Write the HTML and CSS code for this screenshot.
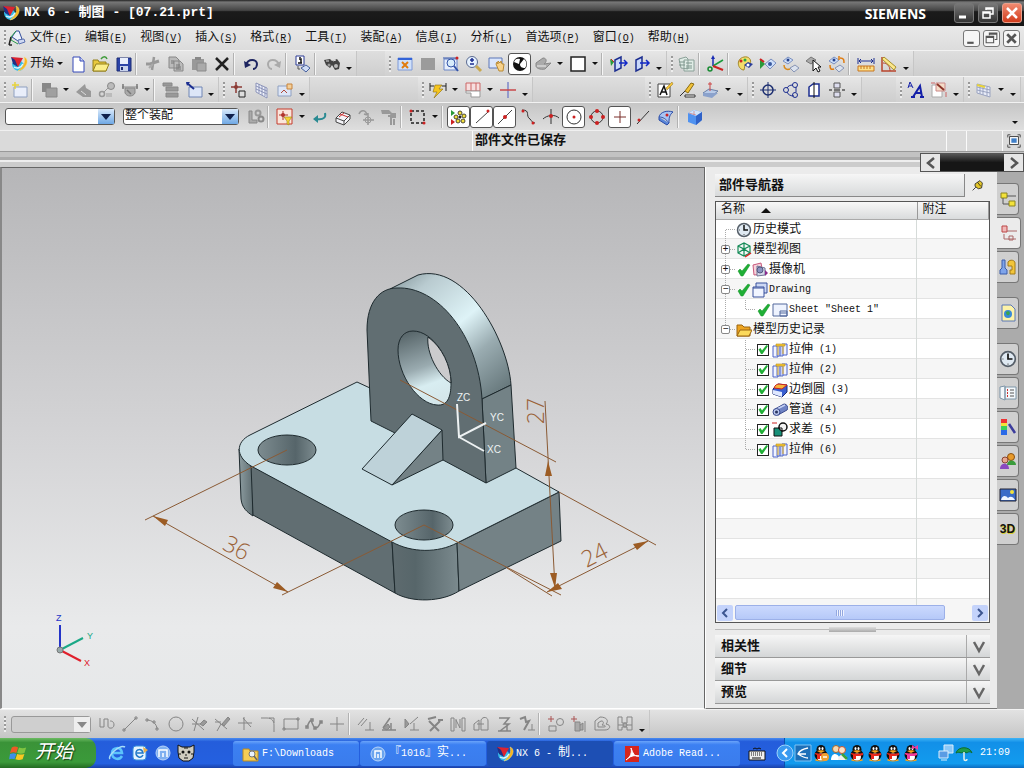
FILE: index.html
```html
<!DOCTYPE html>
<html lang="zh-CN">
<head>
  <meta charset="UTF-8"/>
  <meta name="viewport" content="width=device-width, initial-scale=1.0"/>
  <title>NX 6 - 制图 - [07.21.prt]</title>
  <link rel="stylesheet" href="styles.css">
</head>
<body>

  <!-- Shared icons -->
  <svg class="defs" aria-hidden="true">
    <symbol id="nx" viewBox="0 0 18 18"><path d="M2 8c0 10 12 10 13 2l-5-5z" fill="#35bdea"/><path d="M4 12c3 2 7 1 9-3" stroke="#e4f8ff" stroke-width="1.500"/><path d="M1 2l12 1-5 9z" fill="#dc2430"/><path d="M1 2l4 3 3 7-5-3z" fill="#1f2f86"/><path d="M14 2c6 2 3 12-6 14 5-4 8-9 6-14z" fill="#f8b41c" stroke="#fbe07a" stroke-width=".5"/></symbol>
    <symbol id="tick" viewBox="0 0 16 16"><path d="M2 9l2-2 2 2 6-7 2 1-7 11h-2z" fill="#1fae35" stroke="#16902a" stroke-width=".5"/></symbol>
    <symbol id="extrude" viewBox="0 0 16 16"><path d="M1 4h5v11H1zM10 2h5v11h-5z" fill="#f0f3ff" stroke="#4d63c8"/><path d="M5 4h6v10H5z" fill="#c5d0f6" stroke="#5b6fc4"/><path d="M8 5v9" stroke="#4d63c8"/><path d="M4 2h9v2H4z" fill="#f4c63a" stroke="#b98d16" stroke-width=".6"/><path d="M6 4v9M11 4v8" stroke="#e8b52c"/></symbol>
    <symbol id="qq" viewBox="0 0 18 18"><ellipse cx="9" cy="16" rx="6" ry="1.5" fill="#f7a51d"/><ellipse cx="9" cy="11" rx="6.500" ry="5.500" fill="#111"/><circle cx="9" cy="5.500" r="4.500" fill="#111"/><ellipse cx="9" cy="13" rx="4" ry="3.500" fill="#fff"/><ellipse cx="7.500" cy="4.500" rx="1" ry="1.500" fill="#fff"/><ellipse cx="10.500" cy="4.500" rx="1" ry="1.500" fill="#fff"/><path d="M5 7c2-1 6-1 8 0l-4 2z" fill="#f7a51d"/><path d="M3 9c4 1 8 1 12 0v2c-2 1-5 1-7 1v3H5v-4l-2-1z" fill="#e8281c"/></symbol>
    <symbol id="clock" viewBox="0 0 16 16"><circle cx="8" cy="8" r="6.500" fill="#dfe9f2" stroke="#555e68" stroke-width="1.500"/><path d="M8 3v5h4" stroke="#111" stroke-width="1.500"/><path d="M3 8h1M8 12v1" stroke="#555"/></symbol>
  </svg>

  <!-- Title bar -->
  <header class="titlebar">
    <svg class="icon"><use href="#nx"/></svg>
    <h1>NX 6 - 制图 - [07.21.prt]</h1>
    <span class="brand">SIEMENS</span>
    <div class="win-buttons">
      <button aria-label="最小化"><svg viewBox="0 0 18 18"><path d="M4 13h7" stroke="#fff" stroke-width="3"/></svg></button>
      <button aria-label="还原"><svg viewBox="0 0 18 18"><path d="M7 6V4h7v6h-3M4 8h7v6H4zM4 9h7M7 5h7" stroke="#fff" stroke-width="1.500"/></svg></button>
      <button class="close" aria-label="关闭"><svg viewBox="0 0 18 18"><path d="M4 4l10 10M14 4L4 14" stroke="#fff" stroke-width="2.500"/></svg></button>
    </div>
  </header>

  <!-- Menu -->
  <nav class="menubar">
    <i class="grip"></i>
    <svg class="icon" viewBox="0 0 18 18"><path d="M4 8l4-6h3l3 8-4 2z" fill="#eef2fc" stroke="#334e9c"/><path d="M10 11l6-1 1 3-6 2z" fill="#cfd9f2" stroke="#5a70b0"/><path d="M8 2L3 8v3l7 4" stroke="#2a9a4a"/><path d="M3 8l-2 8M1 16h3" stroke="#222" stroke-width="1.500"/></svg>
    <ul>
      <li><a href="#">文件<span class="en">(<u>F</u>)</span></a></li>
      <li><a href="#">编辑<span class="en">(<u>E</u>)</span></a></li>
      <li><a href="#">视图<span class="en">(<u>V</u>)</span></a></li>
      <li><a href="#">插入<span class="en">(<u>S</u>)</span></a></li>
      <li><a href="#">格式<span class="en">(<u>R</u>)</span></a></li>
      <li><a href="#">工具<span class="en">(<u>T</u>)</span></a></li>
      <li><a href="#">装配<span class="en">(<u>A</u>)</span></a></li>
      <li><a href="#">信息<span class="en">(<u>I</u>)</span></a></li>
      <li><a href="#">分析<span class="en">(<u>L</u>)</span></a></li>
      <li><a href="#">首选项<span class="en">(<u>P</u>)</span></a></li>
      <li><a href="#">窗口<span class="en">(<u>O</u>)</span></a></li>
      <li><a href="#">帮助<span class="en">(<u>H</u>)</span></a></li>
    </ul>
    <div class="doc-buttons">
      <button aria-label="最小化文档"><svg viewBox="0 0 14 14"><path d="M3 11h6" stroke="#555" stroke-width="2"/></svg></button>
      <button aria-label="还原文档"><svg viewBox="0 0 14 14"><path d="M5 4V2h7v6h-2M2 5h7v6H2zM2 6h7M5 3h7" stroke="#555"/></svg></button>
      <button aria-label="关闭文档"><svg viewBox="0 0 14 14"><path d="M3 3l8 8M11 3l-8 8" stroke="#555" stroke-width="2.500"/></svg></button>
    </div>
  </nav>

  <!-- Standard / view / utility toolbars -->
  <div class="toolbar">
    <div class="group">
      <i class="grip"></i>
      <button class="start-app"><svg class="icon"><use href="#nx"/></svg>开始<i class="caret"></i></button>
      <button class="tool" aria-label="新建"><svg viewBox="0 0 18 18"><path d="M4 2h7l4 4v11H4z" fill="#fff" stroke="#3548b8"/><path d="M11 2v4h4" fill="#cdd6f6" stroke="#3548b8"/></svg></button>
      <button class="tool" aria-label="打开"><svg viewBox="0 0 18 18"><path d="M1 5h5l1 2h7v9H1z" fill="#e9c93e" stroke="#94801c"/><path d="M4 9h13l-3 7H1z" fill="#fbee8a" stroke="#94801c"/><path d="M9 4c2-3 5-3 6 0" stroke="#3f9b3a" stroke-width="1.500"/></svg></button>
      <button class="tool" aria-label="保存"><svg viewBox="0 0 18 18"><path d="M2 3h14v13H2z" fill="#2c44a8" stroke="#1c2c74"/><path d="M5 3h8v6H5z" fill="#e8eefc"/><path d="M5 11h8v5H5z" fill="#c8d2ec"/><path d="M6 12h2v3H6z" fill="#1c2c74"/></svg></button>
      <i class="sep"></i>
      <button class="tool" aria-label="剪切"><svg viewBox="0 0 18 18"><path d="M10 2L8 15" stroke="#999" stroke-width="2.500"/><path d="M2 9h4l9-3" stroke="#999" stroke-width="3"/><path d="M5 13l4-4" stroke="#aaa" stroke-width="2"/></svg></button>
      <button class="tool" aria-label="复制"><svg viewBox="0 0 18 18"><path d="M2 2h7l3 3v8H2zM7 6h6l3 3v7H7z" fill="#bbb" stroke="#888"/><path d="M9 10h4M9 12h5M9 14h5M4 6h3M4 8h3" stroke="#777"/></svg></button>
      <button class="tool" aria-label="粘贴"><svg viewBox="0 0 18 18"><path d="M2 4h12v11H2z" fill="#999"/><path d="M5 2h6v3H5z" fill="#888"/><path d="M7 8h9v8H7z" fill="#aaa" stroke="#8a8a8a"/></svg></button>
      <button class="tool" aria-label="删除"><svg viewBox="0 0 18 18"><path d="M3 3l12 12M15 3L3 15" stroke="#222" stroke-width="2.500"/></svg></button>
      <i class="sep"></i>
      <button class="tool" aria-label="撤消"><svg viewBox="0 0 18 18"><path d="M4 10c2-7 11-6 11-1 0 3-2 5-4 5" stroke="#1d2560" stroke-width="2"/><path d="M2 6l1 7 6-3z" fill="#1d2560"/></svg></button>
      <button class="tool" aria-label="重做"><svg viewBox="0 0 18 18"><path d="M14 10c-2-7-11-6-11-1 0 3 2 5 4 5" stroke="#aaa" stroke-width="2"/><path d="M16 6l-1 7-6-3z" fill="#aaa"/></svg></button>
      <i class="sep"></i>
      <button class="tool" aria-label="信息"><svg viewBox="0 0 18 18"><path d="M2 1h8v9H2z" fill="#fff" stroke="#2a3b95"/><path d="M5 4h2v4M4 8h4M6 2v1" stroke="#111" stroke-width="1.500"/><path d="M7 13l5-3 4 3-4 4z" fill="#cfdcf5" stroke="#46609e"/><path d="M4 11v3h2" stroke="#555"/></svg></button>
      <i class="sep"></i>
      <button class="tool" aria-label="查找"><svg viewBox="0 0 18 18"><path d="M1 5l6-1 2 2 5-2 3 4-1 6-4 1-3-5-2 3-4-3z" fill="#444"/><circle cx="13" cy="11" r="2" fill="#bbb"/><circle cx="6" cy="10" r="1.500" fill="#999"/><path d="M3 6h3M10 6l3-1" stroke="#ddd"/></svg></button>
      <i class="caret low"></i>
    </div>
    <div class="group gap-wide">
      <i class="grip"></i>
      <button class="tool" aria-label="适合窗口"><svg viewBox="0 0 18 18"><path d="M2 3h14v12H2z" fill="#cfe0fa" stroke="#7f9ad8"/><path d="M2 4h14" stroke="#3464d8" stroke-width="2"/><path d="M6 7l6 6M12 7l-6 6" stroke="#e07c10" stroke-width="2"/></svg></button>
      <button class="tool" aria-label="按选择缩放"><svg viewBox="0 0 18 18"><path d="M2 3h14v12H2z" fill="#9b9b9b"/></svg></button>
      <button class="tool" aria-label="缩放窗口"><svg viewBox="0 0 18 18"><path d="M2 4h13v11H2z" fill="#e6eefb" stroke="#6a86c8"/><path d="M1 3h15" stroke="#3454a8"/><circle cx="9" cy="8" r="4" fill="#d8ecfb" stroke="#3454a8"/><path d="M12 11l4 5" stroke="#3454a8" stroke-width="2"/><circle cx="15" cy="3" r="1.500" fill="#c22"/></svg></button>
      <button class="tool" aria-label="放大缩小"><svg viewBox="0 0 18 18"><circle cx="7" cy="7" r="5.500" fill="#e6f2ff" stroke="#5a6a90"/><path d="M7 3v4M5 5h4M5 9h4" stroke="#1c2e90" stroke-width="1.500"/><path d="M11 11l5 5" stroke="#c8a850" stroke-width="3"/></svg></button>
      <button class="tool" aria-label="平移"><svg viewBox="0 0 18 18"><path d="M1 3h13v10H1z" fill="#dbe6fb" stroke="#5c76b8"/><path d="M8 9l1-2 1 2V6l2 2 1-2 1 3 2 0-1 7h-4z" fill="#f8d28a" stroke="#b98a34"/></svg></button>
      <button class="tool on" aria-label="着色"><svg viewBox="0 0 18 18"><circle cx="9" cy="9" r="7" fill="#111"/><path d="M9 9l4-5c3 2 3 7 1 9-3 0-5-1-5-4zM8 9L3 7c1-3 3-4 6-3z" fill="#fff"/></svg></button>
      <button class="tool" aria-label="渲染样式"><svg viewBox="0 0 18 18"><path d="M2 8l7-5c4 0 4 4 1 6l7-1-6 6c-5 1-9-1-9-3z" fill="#aaa" stroke="#888"/><path d="M3 11l9 0" stroke="#eee"/></svg></button>
      <i class="caret"></i>
      <button class="tool" aria-label="背景"><svg viewBox="0 0 18 18"><path d="M2 2h14v14H2z" fill="#fff" stroke="#222" stroke-width="1.500"/></svg></button>
      <i class="caret"></i>
      <i class="sep"></i>
      <button class="tool" aria-label="导入"><svg viewBox="0 0 18 18"><path d="M5 5l6-3v11l-6 3z" fill="#c9d8fa" stroke="#1c2e90" stroke-width="1.500"/><path d="M9 8h7M14 5l3 3-3 3" stroke="#1228c8" stroke-width="1.500"/><path d="M0 4l4 3-3 4z" fill="#2a9a3a"/><path d="M1 4l3 3" stroke="#c22"/></svg></button>
      <button class="tool" aria-label="导出"><svg viewBox="0 0 18 18"><path d="M3 5l6-3v11l-6 3z" fill="#c9d8fa" stroke="#1c2e90" stroke-width="1.500"/><path d="M7 8h8M13 5l3 3-3 3" stroke="#1228c8" stroke-width="1.500"/></svg></button>
      <i class="caret low"></i>
    </div>
    <div class="group">
      <i class="grip"></i>
      <button class="tool" aria-label="图层"><svg viewBox="0 0 18 18"><path d="M1 4l7-2 2 2v10l-7-1zM6 5h10v11H6z" fill="#e0ece6" stroke="#8aa098"/><path d="M1 7h6M1 10h6M8 8h6M8 11h6M8 13h6" stroke="#7d958c"/></svg></button>
      <i class="sep"></i>
      <button class="tool" aria-label="坐标系"><svg viewBox="0 0 18 18"><path d="M6 2v9" stroke="#1a2cb4" stroke-width="1.500"/><path d="M6 11l10-6" stroke="#1a9a3a" stroke-width="1.500"/><path d="M6 11l10 4" stroke="#c22" stroke-width="2"/><circle cx="3" cy="14" r="2" stroke="#168a30" stroke-width="1.500"/><path d="M6 0l2 4H4z" fill="#1a2cb4"/></svg></button>
      <i class="sep"></i>
      <button class="tool" aria-label="对象显示"><svg viewBox="0 0 18 18"><path d="M8 2c5-1 8 3 6 7l-5 1-1 5c-6 0-9-11 0-13z" fill="#f3dd6c" stroke="#a4882a"/><circle cx="5" cy="6" r="1.500" fill="#c22"/><circle cx="9" cy="5" r="1.500" fill="#2a4"/><path d="M8 10l4-3 5 2-4 4z" fill="#2a3f9a"/><circle cx="12" cy="10" r="1.500" fill="#fff"/></svg></button>
      <button class="tool" aria-label="显示和隐藏"><svg viewBox="0 0 18 18"><path d="M1 4l5 5-5 5z" fill="#2a9a3a"/><path d="M1 4l4 3" stroke="#c22" stroke-width="2"/><path d="M6 9l6-5 5 4-6 6z" fill="#cfe0fa" stroke="#7a8fc0"/><circle cx="11" cy="9" r="2" fill="#3a5aa0"/></svg></button>
      <button class="tool" aria-label="隐藏"><svg viewBox="0 0 18 18"><path d="M1 6l5-4 5 3-5 4z" fill="#cfe0fa" stroke="#7a8fc0"/><circle cx="6" cy="5" r="1.500" fill="#24408a"/><path d="M8 13l5-3 4 3-5 4z" fill="#dbe2ee" stroke="#8794b4"/><path d="M2 10c0 4 3 5 6 4" stroke="#d98a1c" stroke-width="1.500"/></svg></button>
      <button class="tool" aria-label="选择"><svg viewBox="0 0 18 18"><path d="M1 6l5-4 5 3-5 4z" fill="#aaa" stroke="#777"/><path d="M8 5v11l3-3 2 4 2-1-2-4h3z" fill="#fff" stroke="#111"/></svg></button>
      <button class="tool" aria-label="颠倒显示"><svg viewBox="0 0 18 18"><path d="M1 6l5-4 5 3-5 4z" fill="#cfe0fa" stroke="#7a8fc0"/><path d="M7 13l5-3 4 3-5 4z" fill="#dbe2ee" stroke="#8794b4"/><circle cx="6" cy="5" r="1.500" fill="#24408a"/><path d="M2 10c0 4 1 5 4 4M12 3c4 0 4 2 4 5M11 1v4" stroke="#e07c10" stroke-width="1.500"/></svg></button>
      <i class="sep"></i>
      <button class="tool" aria-label="测量距离"><svg viewBox="0 0 18 18"><path d="M1 3v6M17 3v6M2 6h14M4 4L2 6l2 2M14 4l2 2-2 2" stroke="#1c2e90"/><path d="M1 11h16v5H1z" fill="#fbe08a" stroke="#c8741c"/><path d="M4 11v3M7 11v3M10 11v3M13 11v3" stroke="#c8741c"/></svg></button>
      <button class="tool" aria-label="测量角度"><svg viewBox="0 0 18 18"><path d="M2 2v14h14" stroke="#b8442c" stroke-width="1.500"/><path d="M3 8c4 0 7 3 7 8" stroke="#b8442c"/><path d="M4 2l12 10-2 3L2 4z" fill="#fbe78a" stroke="#a8902a"/></svg></button>
      <i class="caret low"></i>
    </div>
  </div>

  <!-- Drawing / dimension / annotation toolbars -->
  <div class="toolbar">
    <div class="group">
      <i class="grip"></i>
      <button class="tool" aria-label="新建图纸页"><svg viewBox="0 0 18 18"><path d="M3 6h13v10H3z" fill="#e9eefa" stroke="#8fa0c0"/><path d="M4 1v7M1 4h7" stroke="#e8d33a" stroke-width="1.500"/></svg></button>
      <i class="sep"></i>
      <button class="tool" aria-label="基本视图"><svg viewBox="0 0 18 18"><path d="M2 2h9v9H2z" fill="#888"/><path d="M6 7h11v9H6z" fill="#a0a0a0" stroke="#888"/></svg></button>
      <i class="caret"></i>
      <button class="tool" aria-label="投影视图"><svg viewBox="0 0 18 18"><path d="M1 11l9-8 1 4 5 3v6H8z" fill="#999"/><path d="M6 10l5 4" stroke="#ddd"/></svg></button>
      <button class="tool" aria-label="局部放大图"><svg viewBox="0 0 18 18"><circle cx="13" cy="5" r="3.500" fill="#bbb" stroke="#888"/><circle cx="4" cy="13" r="2.500" stroke="#999" stroke-width="1.500"/><path d="M6 11l4-4" stroke="#999"/><path d="M8 12h6v4H8z" fill="#bbb"/></svg></button>
      <button class="tool" aria-label="剖视图"><svg viewBox="0 0 18 18"><path d="M1 6h16M4 7h10v5c-2 4-8 4-10 0z" fill="#aaa" stroke="#888"/><path d="M2 3v5M16 3v5M6 9l4 4" stroke="#777" stroke-width="1.500"/></svg></button>
      <i class="caret"></i>
      <i class="sep"></i>
      <button class="tool" aria-label="断开视图"><svg viewBox="0 0 18 18"><path d="M1 2h9v3H1zM4 6h12v4H4zM4 12h12v4H4z" fill="#999" stroke="#888"/></svg></button>
      <button class="tool" aria-label="更新视图"><svg viewBox="0 0 18 18"><path d="M4 6h13v10H4z" fill="#dde6f7" stroke="#7186b4"/><path d="M2 2l7 6" stroke="#1c2e90" stroke-width="2"/><path d="M1 1h4L2 5z" fill="#1c2e90"/></svg></button>
      <i class="caret low"></i>
    </div>
    <div class="group">
      <i class="grip"></i>
      <button class="tool" aria-label="原点"><svg viewBox="0 0 18 18"><path d="M6 1v11M1 6h11" stroke="#8c3a34" stroke-width="1.500"/><circle cx="6" cy="6" r="2" fill="#8c3a34"/><path d="M9 10h6v6H9z" fill="#ddd" stroke="#222"/></svg></button>
      <button class="tool" aria-label="表格"><svg viewBox="0 0 18 18"><path d="M3 2l11 5v10L3 11z" fill="#eef1fb" stroke="#8b93b8"/><path d="M6 3v9M9 5v9M12 6v9M3 5l11 5M3 8l11 5" stroke="#8b93b8"/></svg></button>
      <button class="tool" aria-label="对齐视图"><svg viewBox="0 0 18 18"><path d="M2 5h13v10H2z" fill="#dde6f7" stroke="#8fa0c0"/><path d="M11 3h5v5h-5z" fill="#f3cf9a" stroke="#c8843c"/><path d="M5 12l3-3 3 3" stroke="#b04a3a"/></svg></button>
      <i class="caret low"></i>
    </div>
    <div class="group gap-dim">
      <i class="grip"></i>
      <button class="tool" aria-label="自动判断尺寸"><svg viewBox="0 0 18 18"><path d="M1 2v8M17 2v8M1 5h4M13 5h4" stroke="#222"/><path d="M6 4h7l-3 4h4l-9 9 3-6H4z" fill="#f5c51e" stroke="#8a6c10" stroke-width=".6"/></svg></button>
      <i class="caret"></i>
      <button class="tool" aria-label="符号标注"><svg viewBox="0 0 18 18"><path d="M2 2h14v8H2z" fill="#f6dede" stroke="#c66"/><path d="M7 2v8M12 2v8" stroke="#c66"/><path d="M2 10h14v6H7v-4H2z" fill="#fff" stroke="#999"/></svg></button>
      <i class="caret"></i>
      <button class="tool" aria-label="中心标记"><svg viewBox="0 0 18 18"><path d="M9 1v16" stroke="#7d86c8" stroke-width="1.500"/><path d="M1 9h16" stroke="#c8474a" stroke-width="1.500"/></svg></button>
      <i class="caret low"></i>
    </div>
    <div class="group gap-note">
      <i class="grip"></i>
      <button class="tool" aria-label="注释"><svg viewBox="0 0 18 18"><path d="M2 3h12v13H2z" fill="#fff" stroke="#444"/><path d="M4 14l4-9 3 9M5 11h5" stroke="#111" stroke-width="1.500"/><path d="M10 7l6-6 1 2-6 6z" fill="#f3c33a" stroke="#94741a" stroke-width=".5"/></svg></button>
      <button class="tool" aria-label="特征控制框"><svg viewBox="0 0 18 18"><path d="M6 10l6-8 3 1-6 9z" fill="#f3c33a" stroke="#8a6c10"/><path d="M1 15l5-5M6 14h10v2H6z" fill="#fff" stroke="#333"/></svg></button>
      <button class="tool" aria-label="基准"><svg viewBox="0 0 18 18"><path d="M1 12l6-4 9 2-6 5z" fill="#b9cbe8" stroke="#6c82a8"/><path d="M1 12v3l9 2 6-5" fill="#8ba2cc"/><path d="M8 1v9M6 3h4" stroke="#c44"/></svg></button>
      <i class="caret"></i>
      <i class="caret low"></i>
    </div>
    <div class="group">
      <i class="grip"></i>
      <button class="tool" aria-label="中心线"><svg viewBox="0 0 18 18"><circle cx="9" cy="9" r="5" stroke="#1c2e70" stroke-width="1.500"/><path d="M9 1v16M1 9h16" stroke="#1c2e70"/></svg></button>
      <button class="tool" aria-label="螺栓圆"><svg viewBox="0 0 18 18"><path d="M11 4C8 4 6 5 5 7M5 11c1 3 4 4 7 4M14 6v5" stroke="#1c2e90"/><circle cx="13" cy="4" r="2.500" stroke="#1c2e90"/><circle cx="4" cy="9" r="2.500" stroke="#1c2e90"/><circle cx="13" cy="14" r="2.500" stroke="#1c2e90"/></svg></button>
      <button class="tool" aria-label="对称中心线"><svg viewBox="0 0 18 18"><path d="M4 6l4-3h6v12H4z" fill="#fff" stroke="#1c2e90" stroke-width="1.500"/><path d="M9 1v16" stroke="#111"/></svg></button>
      <button class="tool" aria-label="圆柱中心线"><svg viewBox="0 0 18 18"><path d="M6 2h6v5H6zM6 11h6v5H6z" fill="#dde" stroke="#555"/><path d="M1 9h3M6 9h6M14 9h3" stroke="#111"/></svg></button>
      <i class="caret low"></i>
    </div>
    <div class="group gap-style">
      <i class="grip"></i>
      <button class="tool" aria-label="样式"><svg viewBox="0 0 18 18"><path d="M1 7l2-6 3 6M2 5h3" stroke="#1420a8"/><path d="M6 16l7-11 2 11M9 12h5M4 16h4M13 16h4" stroke="#1420a8" stroke-width="2"/></svg></button>
      <button class="tool" aria-label="编辑文本"><svg viewBox="0 0 18 18"><path d="M2 4h10v12H2z" fill="#fff" stroke="#aaa"/><path d="M6 2h9v8H6z" fill="#f4dcc8" stroke="#c88"/><path d="M7 3l7 6" stroke="#8a3428" stroke-width="2"/><path d="M1 2h4M16 11v5" stroke="#c66"/></svg></button>
      <i class="caret low"></i>
    </div>
    <div class="group">
      <i class="grip"></i>
      <button class="tool" aria-label="表格注释"><svg viewBox="0 0 18 18"><path d="M2 3l13 3v10L2 12z" fill="#e8ecf8" stroke="#9aa3c0"/><path d="M5 4v9M8 5v9M12 6v9M2 6l13 3M2 9l13 3" stroke="#9aa3c0"/><path d="M2 4l8 2" stroke="#e8d33a" stroke-width="2"/></svg></button>
      <i class="caret"></i>
      <i class="caret low"></i>
    </div>
  </div>

  <!-- Selection bar -->
  <div class="toolbar selection">
    <span class="combo type"><select aria-label="类型过滤器"><option></option></select></span>
    <span class="combo scope"><select aria-label="选择范围"><option>整个装配</option></select></span>
    <button class="tool" aria-label="链接"><svg viewBox="0 0 18 18"><path d="M2 3h3v9h5v3H2z" fill="#aaa" stroke="#888"/><circle cx="11" cy="5" r="2.500" stroke="#999" stroke-width="2"/><circle cx="14" cy="11" r="2.500" stroke="#8a8a8a" stroke-width="2"/></svg></button>
    <i class="sep"></i>
    <button class="tool" aria-label="常规选择过滤器"><svg viewBox="0 0 18 18"><path d="M1 1h15v15H1z" fill="#fae6dc" stroke="#c43a2c"/><path d="M7 3v9M3 7h9" stroke="#b0342a"/><circle cx="7" cy="7" r="2" fill="#b0342a"/><path d="M8 9h8l-3 4v4l-2-1v-3z" fill="#f5d534" stroke="#94801c" stroke-width=".6"/></svg></button>
    <i class="caret"></i>
    <button class="tool" aria-label="重置"><svg viewBox="0 0 18 18"><path d="M14 5c1 4-1 7-8 6" stroke="#2a8a92" stroke-width="2"/><path d="M2 11l5-4v8z" fill="#2a8a92"/></svg></button>
    <button class="tool" aria-label="体"><svg viewBox="0 0 18 18"><path d="M2 10l6-6 8 3v4l-6 6-8-3z" fill="#f4f4f8" stroke="#444"/><path d="M2 10l8 3 6-6M10 13v4" stroke="#444"/><path d="M6 6l8 3M5 9l5-4" stroke="#c33"/></svg></button>
    <button class="tool" aria-label="装配约束"><svg viewBox="0 0 18 18"><path d="M2 6c2-5 7-4 8 1M10 7l-3-1M11 5v12M6 12h11" stroke="#999" stroke-width="1.500"/><circle cx="11" cy="12" r="3" stroke="#999"/></svg></button>
    <button class="tool" aria-label="移动组件"><svg viewBox="0 0 18 18"><path d="M1 2h8l3 3h4v5h-4l-2-4H2z" fill="#999"/><path d="M8 8h3v9M14 11v6" stroke="#999" stroke-width="2"/></svg></button>
    <i class="sep"></i>
    <button class="tool" aria-label="矩形选择"><svg viewBox="0 0 18 18"><path d="M2 3h13v12H2z" stroke="#222" stroke-width="1.500" stroke-dasharray="3 2"/><circle cx="2" cy="3" r="1.500" fill="#c22"/><circle cx="15" cy="15" r="1.500" fill="#c22"/></svg></button>
    <i class="caret"></i>
    <i class="sep"></i>
    <button class="tool on" aria-label="启用捕捉点"><svg viewBox="0 0 18 18"><path d="M1 2l4 3-4 3z" fill="#2a9a3a"/><path d="M1 11l4 3-4 3z" fill="#c22"/><g fill="#f3df3a" stroke="#222" stroke-width=".8"><circle cx="10" cy="5" r="2"/><circle cx="6" cy="9" r="2"/><circle cx="14" cy="8" r="2"/><circle cx="8" cy="13" r="2"/><circle cx="13" cy="13" r="2"/></g><circle cx="10" cy="9" r="1.500" fill="#222"/></svg></button>
    <button class="tool on" aria-label="端点"><svg viewBox="0 0 18 18"><path d="M3 15L15 4" stroke="#444"/><circle cx="15" cy="3" r="1.500" fill="#c22"/></svg></button>
    <button class="tool on" aria-label="中点"><svg viewBox="0 0 18 18"><path d="M2 16L16 2" stroke="#444"/><circle cx="9" cy="9" r="2" fill="#c22"/></svg></button>
    <button class="tool" aria-label="控制点"><svg viewBox="0 0 18 18"><path d="M3 2c9 0 3 6 8 9 2 2 2 4 5 4" stroke="#333"/><circle cx="4" cy="3" r="1.500" fill="#c22"/><circle cx="14" cy="15" r="1.500" fill="#c22"/></svg></button>
    <button class="tool" aria-label="交点"><svg viewBox="0 0 18 18"><path d="M9 1v15M1 11c4-4 12-5 16-1" stroke="#333"/><circle cx="9" cy="8" r="2" fill="#c22"/></svg></button>
    <button class="tool on" aria-label="圆弧中心"><svg viewBox="0 0 18 18"><circle cx="9" cy="9" r="7" stroke="#333"/><circle cx="9" cy="9" r="1.500" fill="#c22"/></svg></button>
    <button class="tool" aria-label="象限点"><svg viewBox="0 0 18 18"><circle cx="9" cy="9" r="6" stroke="#333"/><g fill="#c22"><circle cx="9" cy="3" r="2"/><circle cx="3" cy="9" r="2"/><circle cx="15" cy="9" r="2"/><circle cx="9" cy="15" r="2"/></g></svg></button>
    <button class="tool on" aria-label="现有点"><svg viewBox="0 0 18 18"><path d="M9 3v12M3 9h12" stroke="#7a2e2a"/></svg></button>
    <button class="tool" aria-label="曲线上的点"><svg viewBox="0 0 18 18"><path d="M3 16L15 3" stroke="#333"/><circle cx="5" cy="12" r="1.500" fill="#c22"/></svg></button>
    <button class="tool" aria-label="曲面上的点"><svg viewBox="0 0 18 18"><path d="M2 9c1-5 8-7 14-5-4 3-4 7-4 11-3-4-6-6-10-6z" fill="#a9c4f2" stroke="#2a4ca8"/><path d="M2 9v3l8 5 2-2" fill="#5a86d8" stroke="#2a4ca8"/><circle cx="10" cy="7" r="1.500" fill="#c22"/></svg></button>
    <i class="sep"></i>
    <button class="tool" aria-label="着色体"><svg viewBox="0 0 18 18"><path d="M2 5l6-3 8 2v8l-6 5-8-3z" fill="#4f92f0"/><path d="M2 5l6-3 8 2-6 4z" fill="#cfe4fc"/><path d="M10 8l6-4v8l-6 5z" fill="#2f62c8"/><path d="M3 5l7 2M8 3v4" stroke="#c66" stroke-width=".6"/></svg></button>
    <i class="caret low last"></i>
  </div>

  <!-- Cue / status line -->
  <div class="status">
    <p class="cue"></p>
    <p class="message">部件文件已保存</p>
    <p class="cell"></p>
    <p class="cell wide"></p>
    <button aria-label="全屏"><svg viewBox="0 0 18 18"><path d="M2 5V2h3M13 2h3v3M16 13v3h-3M5 16H2v-3" stroke="#444"/><path d="M4 4h10v9H4z" fill="#fff" stroke="#333"/><path d="M6 6h6v5H6z" fill="#3f7fc8"/></svg></button>
  </div>
  <div class="divider">
    <div class="strip-nav">
      <button aria-label="向左"><svg viewBox="0 0 14 14"><path d="M10 2L4 7l6 5" stroke="#555" stroke-width="2.500"/></svg></button>
      <button aria-label="向右"><svg viewBox="0 0 14 14"><path d="M4 2l6 5-6 5" stroke="#555" stroke-width="2.500"/></svg></button>
    </div>
  </div>

  <main class="work">
    <!-- Graphics window -->
    <section class="viewport">
      <svg viewBox="2 168 702 540" preserveAspectRatio="xMinYMin meet" role="img" aria-label="零件模型">
        <defs>
          <linearGradient id="band" gradientUnits="userSpaceOnUse" x1="400" y1="275" x2="500" y2="395"><stop offset="0" stop-color="#8ea0a5"/><stop offset=".15" stop-color="#b9cbd0"/><stop offset=".48" stop-color="#def3f7"/><stop offset=".7" stop-color="#9aacb1"/><stop offset="1" stop-color="#66777b"/></linearGradient>
          <linearGradient id="bore" gradientUnits="userSpaceOnUse" x1="410" y1="332" x2="435" y2="402"><stop offset="0" stop-color="#59676b"/><stop offset=".5" stop-color="#9aabb0"/><stop offset=".75" stop-color="#d8edf1"/><stop offset="1" stop-color="#d4e6ea"/></linearGradient>
          <linearGradient id="hole"><stop offset="0" stop-color="#7d8c90"/><stop offset=".65" stop-color="#56656a"/><stop offset="1" stop-color="#7d8c90"/></linearGradient>
          <linearGradient id="corner"><stop offset="0" stop-color="#5e6b6f"/><stop offset=".35" stop-color="#57666a"/><stop offset="1" stop-color="#7b8a8e"/></linearGradient>
          <linearGradient id="end"><stop offset="0" stop-color="#8d9da1"/><stop offset="1" stop-color="#5f6d71"/></linearGradient>
        </defs>
        <!-- base plate -->
        <g stroke="#1e2a2e" stroke-width="1" stroke-linejoin="round">
          <path d="M239 449L241 499C242 508 247 512 253 516V467z" fill="url(#end)"/>
          <path d="M251 465L392 541L395 593L253 515z" fill="#616e72"/>
          <path d="M392 541L457 541L459 591C442 602 412 603 395 593z" fill="url(#corner)"/>
          <path d="M457 543L559 492L561 541L459 591z" fill="#748286"/>
          <path d="M357 382L250 435C236 442 235 456 251 466L392 542C412 553 438 553 457 543L559 492L516 468L370 388z" fill="#c7dde3"/>
          <ellipse cx="287" cy="450" rx="29" ry="15" fill="url(#hole)"/>
          <ellipse cx="424" cy="525" rx="29" ry="15" fill="url(#hole)"/>
          <!-- lug -->
          <path d="M390 289L418 275C465 262 508 340 511 385L482 399z" fill="url(#band)"/>
          <path d="M482 399L511 385L516 468L486 483z" fill="#738286"/>
          <path d="M371 421L367 330C367 302 380 288 397 288C437 286 478 334 482 399L486 483L443 460L393 432z" fill="#616e72"/>
          <path d="M398 350C398 338 404 331 413 331C433 331 451 360 451 383C451 398 447 406 437 405C418 404 398 375 398 350z" fill="url(#bore)"/>
          <path d="M428 337C426 352 438 376 451 383C451 366 442 347 428 337z" fill="#cbcbcd"/>
          <!-- rib -->
          <path d="M442 430L443 460L392 485z" fill="#748286"/>
          <path d="M412 414L442 430L392 485L362 469z" fill="#bed2d9"/>
        </g>
        <!-- dimensions -->
        <g stroke="#8a5a34" stroke-width="1">
          <path d="M145 520L287 450M153 516L288 592M282 595L424 525L561 595M507 568L552 596"/>
          <path d="M559 492L656 545M547 592L648 541M545 401L555 588M400 380L556 462"/>
        </g>
        <g fill="#9c5c24">
          <path d="M153 516L168 520L165 526zM288 592L277 582L273 588zM648 541L633 544L637 550zM547 592L558 583L562 589zM548 461L545 476H552zM555 588L550 573H557z"/>
        </g>
        <g class="dims">
          <text x="237" y="547" transform="rotate(28 237 547)">36</text>
          <text x="594" y="554" transform="rotate(-27 594 554)">24</text>
          <text x="535" y="411" transform="rotate(-90 535 411)">27</text>
        </g>
        <!-- work coordinate system -->
        <path d="M457 404L459 437L486 423M459 437L484 451" stroke="#eef2f3" stroke-width="2"/>
        <g class="wcs"><text x="457" y="401">ZC</text><text x="490" y="421">YC</text><text x="487" y="453">XC</text></g>
        <!-- view triad -->
        <g stroke-width="2">
          <path d="M60 650V625" stroke="#2434c8"/><path d="M60 650L83 638" stroke="#1aa886"/><path d="M60 650L81 661" stroke="#e0202c"/>
        </g>
        <circle cx="60" cy="650" r="3" fill="#9aa" stroke="#777"/>
        <g class="triad"><text x="56" y="621" fill="#2434c8">Z</text><text x="87" y="639" fill="#1aa886">Y</text><text x="84" y="666" fill="#e0202c">X</text></g>
      </svg>
    </section>

    <!-- Part navigator -->
    <aside class="navigator">
      <div class="nav-head">
        <h2>部件导航器</h2>
        <button aria-label="固定"><svg viewBox="0 0 16 16"><path d="M2 14l4-4" stroke="#222"/><path d="M5 6l6-4 3 3-1 6-4 1-4-3z" fill="#e3c62a" stroke="#222"/><path d="M8 4l4 5" stroke="#222"/></svg></button>
      </div>
      <div class="tree">
        <table>
          <thead><tr><th class="name">名称<i class="sort"></i></th><th>附注</th></tr></thead>
          <tbody>
            <tr><td><div class="node"><i class="guide first"></i><svg class="ico"><use href="#clock"/></svg>历史模式</div></td><td></td></tr>
            <tr><td><div class="node"><i class="guide mid"><b>+</b></i><svg class="ico" viewBox="0 0 16 16"><path d="M2 4l6-3 6 3v7l-6 3-6-3zM2 4l6 3 6-3M8 1v13M2 11l6-4 6 4" stroke="#138a56" stroke-width="1.200"/><path d="M9 15l6-4" stroke="#d22" stroke-width="1.500"/></svg>模型视图</div></td><td></td></tr>
            <tr><td><div class="node"><i class="guide mid"><b>+</b></i><svg class="ico"><use href="#tick"/></svg><svg class="ico" viewBox="0 0 16 16"><path d="M1 3l8-2 2 11-9 1z" fill="#f7d3dc" stroke="#c8587c"/><path d="M5 4l8 2v7l-8 1z" fill="#d5d9ea" stroke="#6f7494"/><circle cx="8" cy="8" r="3" fill="#8a92c0" stroke="#545a80"/><path d="M13 8l3 3-3 3z" fill="#8a2a8c"/></svg>摄像机</div></td><td></td></tr>
            <tr><td><div class="node"><i class="guide mid"><b>−</b></i><svg class="ico"><use href="#tick"/></svg><svg class="ico" viewBox="0 0 16 16"><path d="M4 1h11v10H4z" fill="#cdd8f4" stroke="#38519c"/><path d="M1 5h11v10H1z" fill="#f1f5ff" stroke="#38519c"/><path d="M1 6h11" stroke="#38519c"/></svg><span class="en">Drawing</span></div></td><td></td></tr>
            <tr><td><div class="node"><i class="guide line"></i><i class="guide last"></i><svg class="ico"><use href="#tick"/></svg><svg class="ico" viewBox="0 0 16 16"><path d="M1 2h14v12H1z" fill="#eef3fe" stroke="#52689c"/><path d="M8 9h7v5H8zM8 11h7" stroke="#52689c"/></svg><span class="en">Sheet "Sheet 1"</span></div></td><td></td></tr>
            <tr><td><div class="node"><i class="guide end"><b>−</b></i><svg class="ico" viewBox="0 0 16 16"><path d="M1 3h5l2 2h6v9H1z" fill="#eda421" stroke="#9a6410"/><path d="M4 8h12l-3 6H1z" fill="#fbd95c" stroke="#9a6410"/></svg>模型历史记录</div></td><td></td></tr>
            <tr><td><label class="node"><i class="guide"></i><i class="guide tee"></i><input type="checkbox" checked><svg class="ico"><use href="#extrude"/></svg>拉伸<span class="en"> (1)</span></label></td><td></td></tr>
            <tr><td><label class="node"><i class="guide"></i><i class="guide tee"></i><input type="checkbox" checked><svg class="ico"><use href="#extrude"/></svg>拉伸<span class="en"> (2)</span></label></td><td></td></tr>
            <tr><td><label class="node"><i class="guide"></i><i class="guide tee"></i><input type="checkbox" checked><svg class="ico" viewBox="0 0 16 16"><path d="M1 7l5-5 9 1v7l-5 5-9-3z" fill="#3a5fd0" stroke="#1c2c74"/><path d="M2 6c1-3 3-4 5-4l8 1-5 4z" fill="#f7b53c" stroke="#c22"/><path d="M1 8l9 2v5l-9-3z" fill="#dfe8ff"/></svg>边倒圆<span class="en"> (3)</span></label></td><td></td></tr>
            <tr><td><label class="node"><i class="guide"></i><i class="guide tee"></i><input type="checkbox" checked><svg class="ico" viewBox="0 0 16 16"><path d="M3 7l9-5c3 0 5 4 3 6l-9 5z" fill="#6f83c4" stroke="#3a4a8c"/><path d="M5 7l8-4" stroke="#c4d0f4" stroke-width="1.500"/><ellipse cx="4.500" cy="10" rx="3.500" ry="3.500" fill="#b9c6ec" stroke="#3a4a8c"/><circle cx="4.500" cy="10" r="1.500" fill="#2a3560"/></svg>管道<span class="en"> (4)</span></label></td><td></td></tr>
            <tr><td><label class="node"><i class="guide"></i><i class="guide tee"></i><input type="checkbox" checked><svg class="ico" viewBox="0 0 16 16"><path d="M2 6h8v8H2z" fill="#189078" stroke="#111"/><circle cx="11" cy="5" r="4" fill="#f4f4f4" stroke="#111" stroke-width="1.500"/><path d="M6 6h4v4" stroke="#111"/><path d="M0 1h5" stroke="#c22"/></svg>求差<span class="en"> (5)</span></label></td><td></td></tr>
            <tr><td><label class="node"><i class="guide"></i><i class="guide last"></i><input type="checkbox" checked><svg class="ico"><use href="#extrude"/></svg>拉伸<span class="en"> (6)</span></label></td><td></td></tr>
          </tbody>
        </table>
        <div class="hscroll">
          <button aria-label="向左滚动"><svg viewBox="0 0 14 14"><path d="M9 3L5 7l4 4" stroke="#3c5590" stroke-width="2"/></svg></button>
          <div class="track"><span class="thumb"></span></div>
          <button aria-label="向右滚动"><svg viewBox="0 0 14 14"><path d="M5 3l4 4-4 4" stroke="#3c5590" stroke-width="2"/></svg></button>
        </div>
      </div>
      <div class="handle"></div>
      <button class="section">相关性<svg viewBox="0 0 14 14"><path d="M2 2l5 9 5-9" stroke="#666" stroke-width="2.500"/></svg></button>
      <button class="section">细节<svg viewBox="0 0 14 14"><path d="M2 2l5 9 5-9" stroke="#666" stroke-width="2.500"/></svg></button>
      <button class="section">预览<svg viewBox="0 0 14 14"><path d="M2 2l5 9 5-9" stroke="#666" stroke-width="2.500"/></svg></button>
    </aside>

    <!-- Resource bar tabs -->
    <nav class="tabs">
      <button aria-label="装配导航器"><svg viewBox="0 0 18 18"><path d="M2 3h6v5H2zM10 11h6v5h-6z" fill="#f3e23a" stroke="#8c8420"/><path d="M4 8v6h6M8 6h9" stroke="#555"/></svg></button>
      <button class="active" aria-label="部件导航器"><svg viewBox="0 0 18 18"><path d="M2 2h5v6H2z" fill="#f0b8b8" stroke="#b44"/><path d="M7 7h10M4 10v5h12M9 12h4v4H9z" stroke="#a66"/></svg></button>
      <button aria-label="重用库"><svg viewBox="0 0 18 18"><path d="M3 2h3v8l2 2v4H1v-4l2-2z" fill="#7fa4ea" stroke="#3a5cab"/><path d="M9 4c2-3 7-2 7 1v11h-5v-4h2V8h-4z" fill="#f2c53a" stroke="#a47c18"/></svg></button>
      <button class="spaced" aria-label="浏览器"><svg viewBox="0 0 18 18"><path d="M3 1h9l4 4v12H3z" fill="#fdf3a8" stroke="#5b78b8"/><circle cx="9" cy="10" r="4" fill="#3a8ad8"/><path d="M7 8c3-2 5 1 3 3-2 1-3-1-3-3z" fill="#3aa44c"/></svg></button>
      <button class="spaced" aria-label="历史记录"><svg><use href="#clock"/></svg></button>
      <button aria-label="系统材料"><svg viewBox="0 0 18 18"><path d="M1 3l5-1v14l-5-2zM6 3h11v12H6z" fill="#f4f8fb" stroke="#7d95a8"/><path d="M11 6h4M11 9h4M11 12h4" stroke="#555"/><path d="M8 6h1M8 9h1M8 12h1" stroke="#c33" stroke-width="2"/></svg></button>
      <button aria-label="可视化"><svg viewBox="0 0 18 18"><path d="M2 1h6v4H2z" fill="#e33"/><path d="M2 5h6v3H2z" fill="#f4e23a"/><path d="M2 8h6v4H2z" fill="#3ad05c"/><path d="M2 12h6v5H2z" fill="#2a6ae8"/><path d="M10 6l6 9" stroke="#3c3c9c" stroke-width="2.500"/></svg></button>
      <button aria-label="角色"><svg viewBox="0 0 18 18"><circle cx="12" cy="5" r="3.500" fill="#e89a2a" stroke="#8a5010"/><path d="M8 13c0-6 9-6 9 0z" fill="#3a9c3c"/><circle cx="6" cy="8" r="3" fill="#e8a890" stroke="#843"/><path d="M1 17c0-7 9-7 9 0z" fill="#8a4ac0"/></svg></button>
      <button aria-label="系统场景"><svg viewBox="0 0 18 18"><path d="M1 3h16v12H1z" fill="#3a6cc8" stroke="#223"/><path d="M2 14c1-5 5-5 7-2 3-3 6 0 7 2z" fill="#f0f6ff"/><circle cx="13" cy="6" r="2" fill="#f4e23a"/></svg></button>
      <button aria-label="三维" class="three">3D</button>
    </nav>
  </main>

  <!-- Sketch toolbar -->
  <div class="toolbar sketch">
    <div class="group">
      <i class="grip"></i>
      <span class="combo disabled"><select aria-label="草图" disabled><option></option></select></span>
      <button class="tool" aria-label="轮廓"><svg viewBox="0 0 18 18"><path d="M2 3v9h4V4h4v7c0 3 6 3 6-1s-3-4-4-4"/></svg></button>
      <button class="tool" aria-label="直线"><svg viewBox="0 0 18 18"><path d="M3 15L15 3M2 14h2v2H2zM14 2h2v2h-2z"/></svg></button>
      <button class="tool" aria-label="圆弧"><svg viewBox="0 0 18 18"><path d="M3 5c5 0 10 4 10 9M2 4h2v2H2zM12 13h2v2h-2zM9 6h2v2H9z"/></svg></button>
      <button class="tool" aria-label="圆"><svg viewBox="0 0 18 18"><circle cx="9" cy="9" r="7"/></svg></button>
      <button class="tool" aria-label="快速修剪"><svg viewBox="0 0 18 18"><path d="M2 4l12 11M8 2L4 16M2 9h8"/><path d="M10 9l4-4 3 2-4 4z" fill="#999"/></svg></button>
      <button class="tool" aria-label="快速延伸"><svg viewBox="0 0 18 18"><path d="M2 4l12 10M8 9L4 16M2 7h6"/><path d="M9 9l6-7 2 2-6 7z" fill="#999"/></svg></button>
      <button class="tool" aria-label="制作拐角"><svg viewBox="0 0 18 18"><path d="M8 2v13M2 8h14M7 3l8 9"/></svg></button>
      <button class="tool" aria-label="圆角"><svg viewBox="0 0 18 18"><path d="M2 3h6c5 0 7 3 7 7v7M10 3h5v5"/></svg></button>
      <button class="tool" aria-label="矩形"><svg viewBox="0 0 18 18"><path d="M2 4h14v10H2zM1 13h2v2H1zM15 3h2v2h-2z"/></svg></button>
      <button class="tool" aria-label="艺术样条"><svg viewBox="0 0 18 18"><path d="M2 12c4-10 4-6 6-2 2 5 5 4 8-4M1 11h2v2H1zM6 4h2v2H6zM9 12h2v2H9zM15 6h2v2h-2z" stroke-width="1.500"/></svg></button>
      <button class="tool" aria-label="点"><svg viewBox="0 0 18 18"><path d="M9 2v14M2 9h14"/></svg></button>
      <i class="sep"></i>
      <button class="tool" aria-label="约束"><svg viewBox="0 0 18 18"><path d="M1 10l6-7M4 11l6-7M13 7v8M8 15h9"/></svg></button>
      <button class="tool" aria-label="自动约束"><svg viewBox="0 0 18 18"><path d="M2 15h14M11 8v7M3 13l7-10" stroke-width="1.500"/><path d="M3 13l5-4 2 3-3 3z" fill="#999"/></svg></button>
      <button class="tool" aria-label="显示约束"><svg viewBox="0 0 18 18"><path d="M2 4l4 5-4 4z" fill="#999"/><path d="M7 9l8-7M11 8v7M7 15h9"/></svg></button>
      <button class="tool" aria-label="不显示约束"><svg viewBox="0 0 18 18"><path d="M2 4l8-2M12 5h5M3 6l10 10M14 6L4 16" stroke-width="2"/></svg></button>
      <button class="tool" aria-label="镜像"><svg viewBox="0 0 18 18"><path d="M2 3v13h3V3zM13 3v13h3V3zM7 5l4 8M7 13V4M11 4v9"/></svg></button>
      <button class="tool" aria-label="偏置曲线"><svg viewBox="0 0 18 18"><path d="M2 15V9l5-4v10zM9 15V5c2-4 7-3 7 1v9zM5 9h7"/></svg></button>
      <button class="tool" aria-label="转换"><svg viewBox="0 0 18 18"><path d="M4 3h10l-5 6h5L5 16M3 16h13M12 9v7" stroke-width="1.500"/></svg></button>
      <button class="tool" aria-label="备选解"><svg viewBox="0 0 18 18"><path d="M2 4l5-2 1 5 3-1-5 9" stroke-width="2"/><path d="M10 15h7M14 9v6"/></svg></button>
      <i class="sep"></i>
      <button class="tool" aria-label="添加曲线"><svg viewBox="0 0 18 18"><path d="M4 1v6M1 4h6" stroke="#a55"/><path d="M2 11h7v5H2z"/><circle cx="13" cy="7" r="3.500"/></svg></button>
      <button class="tool" aria-label="投影曲线"><svg viewBox="0 0 18 18"><path d="M4 1v6M1 4h6" stroke="#a55"/><path d="M5 7h5v9H5zM10 10l3-2v7h-3M15 6v11" fill="#aaa"/></svg></button>
      <button class="tool" aria-label="偏置"><svg viewBox="0 0 18 18"><path d="M2 15V6l5-4c7 0 9 4 6 7 6 1 4 6-1 6zM5 12V8l3-2c3 0 3 2 1 4 4 0 4 2 2 2z"/></svg></button>
      <button class="tool" aria-label="编辑定义线串"><svg viewBox="0 0 18 18"><path d="M2 2h4v6h5V2h5v13h-5v-3H6v3H2zM2 10h14"/><circle cx="9" cy="10" r="2"/></svg></button>
      <i class="caret low"></i>
    </div>
  </div>

  <!-- Windows taskbar -->
  <footer class="taskbar">
    <button class="start"><svg viewBox="0 0 20 20"><path d="M2 4c3-2 5-1 7 0L7 10c-2-1-4-1-7 0z" fill="#ee5a26"/><path d="M10 4c3 1 5 1 8 0l-2 6c-3 1-5 1-8 0z" fill="#7fc441"/><path d="M0 11c3-1 5-1 7 0l-2 6c-2-1-4-1-6 0z" fill="#3d8fe8"/><path d="M8 11c3 1 5 1 8 0l-2 6c-3 1-5 1-8 0z" fill="#f8c822"/></svg>开始</button>
    <div class="quick">
      <a href="#" aria-label="Internet Explorer"><svg viewBox="0 0 18 18"><path d="M14 12c-3 5-10 3-10-3s9-7 10 0H5" stroke="#5cc4fb" stroke-width="2.500"/><path d="M2 15C-1 12 12 0 17 3" stroke="#a8def9" stroke-width="1.500"/></svg></a>
      <a href="#" aria-label="Outlook Express"><svg viewBox="0 0 18 18"><rect x="2" y="2" width="13" height="14" rx="3" fill="#e6f4ff" stroke="#3a92dc"/><path d="M12 11c-2 4-7 2-7-2s6-5 7 0H6" stroke="#2078c8" stroke-width="1.500"/><path d="M12 3l5 3-4 3" fill="#e8b050"/></svg></a>
      <a href="#" aria-label="傲游"><svg viewBox="0 0 18 18"><circle cx="9" cy="9" r="7" fill="#7fb0f0" stroke="#b8d4fa"/><path d="M5 13V6h8v7M9 9v4" stroke="#fff" stroke-width="1.500"/></svg></a>
      <a href="#" aria-label="虎"><svg viewBox="0 0 18 18"><path d="M1 1l4 2h8l4-2v7l-1 6-4 3H6l-4-3-1-6z" fill="#d0ccc0" stroke="#111"/><circle cx="6" cy="8" r="1.500" fill="#111"/><circle cx="12" cy="8" r="1.500" fill="#111"/><path d="M7 14h4M8 11h2M8 3v2M10 3v2M2 10h2M14 10h2" stroke="#111"/></svg></a>
    </div>
    <div class="tasks">
      <button><svg viewBox="0 0 18 18"><path d="M1 4h6l1 2h8v10H1z" fill="#f5cd55" stroke="#b98a20"/><circle cx="10" cy="9" r="3" fill="#e8f2ff" stroke="#777"/><path d="M12 11l3 4" stroke="#666" stroke-width="1.500"/></svg><span class="en">F:\Downloads</span></button>
      <button><svg viewBox="0 0 18 18"><circle cx="9" cy="9" r="7" fill="#6aa4ee" stroke="#b8d4fa"/><path d="M6 13V6h6v7M9 9v4" stroke="#fff" stroke-width="1.500"/></svg><span>『<span class="en">1016</span>』实<span class="en">...</span></span></button>
      <button class="current"><svg><use href="#nx"/></svg><span><span class="en">NX 6 - </span>制<span class="en">...</span></span></button>
      <button><svg viewBox="0 0 18 18"><path d="M2 1h14v16H2z" fill="#d6261c"/><path d="M3 15c5-3 6-8 5-12 2 5 3 9 8 8-5-1-9 0-13 4z" fill="#fff" stroke="#fff"/></svg><span class="en">Adobe Read...</span></button>
    </div>
    <button class="keyboard" aria-label="输入法"><svg viewBox="0 0 18 18"><path d="M1 7h16v9H1z" fill="#eee" stroke="#111"/><path d="M3 9h12M3 11h12" stroke="#111" stroke-dasharray="1 1"/><path d="M4 14h9M5 5l2-1 2 1 2-1 2 1" stroke="#111"/></svg></button>
    <div class="tray">
      <button class="expand" aria-label="显示隐藏图标"><svg viewBox="0 0 18 18"><circle cx="9" cy="9" r="8" fill="#3a9af0" stroke="#9dd2fb"/><path d="M11 5L7 9l4 4" stroke="#fff" stroke-width="2"/></svg></button>
      <svg viewBox="0 0 18 18"><path d="M1 1h16v16H1z" fill="#1c6fb8" stroke="#7fc4f4"/><path d="M14 4C8 5 5 8 4 10c3 2 6 4 10 4M4 10h8" stroke="#fff" stroke-width="1.500"/></svg>
      <svg viewBox="0 0 18 18"><use href="#qq"/><circle cx="13" cy="13" r="4" fill="#f0a030"/><path d="M11 13h4" stroke="#fff" stroke-width="1.500"/></svg>
      <svg viewBox="0 0 18 18"><circle cx="6" cy="5" r="3.500" fill="#f6d9b0" stroke="#a0642a"/><circle cx="12" cy="6" r="3.500" fill="#fbe3c8" stroke="#c8502a"/><path d="M1 16c0-8 8-8 9 0z" fill="#fff"/><path d="M8 16c0-7 9-7 9 0z" fill="#f0f0f0"/><path d="M12 10l5 5" stroke="#3aa43c" stroke-width="2.500"/></svg>
      <svg><use href="#qq"/></svg>
      <svg><use href="#qq"/></svg>
      <svg><use href="#qq"/></svg>
      <svg viewBox="0 0 18 18"><use href="#qq"/><path d="M10 1l3 2 3-2v5l-3-2-3 1z" fill="#f03aa0"/><path d="M3 9c4 1 8 1 12 0v2c-2 1-5 1-7 1v3H5v-4l-2-1z" fill="#f03aa0"/></svg>
      <svg class="net" viewBox="0 0 18 18"><path d="M7 1h9v8H7z" fill="#8cc8f8" stroke="#dceefc"/><path d="M2 7h9v7H2zM4 16h6" fill="#5a9ce4" stroke="#dceefc"/></svg>
      <svg viewBox="0 0 18 18"><path d="M1 9C3 2 15 2 17 9c-2-2-4-1-5 0-1-1-4-1-6 0-1-1-3-1-5 0z" fill="#1f9c4c" stroke="#0c6c30"/><path d="M9 8v7c0 2 3 2 3 0" stroke="#e8f0e8" stroke-width="1.500"/></svg>
      <time>21:09</time>
    </div>
  </footer>

</body>
</html>
```
FILE: styles.css
```css
* {
  box-sizing: border-box;
}

body {
  margin: 0;
  height: 100vh;
  display: flex;
  flex-direction: column;
  overflow: hidden;
  font-family: "Liberation Mono", "Noto Sans CJK SC", monospace;
  font-size: 12px;
  line-height: 16px;
  color: #111;
  background: #d6d6d6;
}

h1, h2, p, ul {
  margin: 0;
  padding: 0;
}

button, select, input {
  margin: 0;
  padding: 0;
  border: 0;
  background: none;
  font: inherit;
  color: inherit;
}

a {
  color: inherit;
  text-decoration: none;
}

svg {
  fill: none;
  flex: none;
}

.defs {
  display: none;
}

.icon {
  width: 18px;
  height: 18px;
}

.en {
  font-size: 10px;
  white-space: pre;
}

/* Title bar */
.titlebar {
  flex: none;
  height: 26px;
  display: flex;
  align-items: center;
  padding: 0 2px;
  background: linear-gradient(#222, #777 8%, #444 40%, #1b1b1b 45%, #161616);
  color: #fff;
}

.titlebar h1 {
  flex: 1;
  margin-left: 4px;
  font-size: 13px;
  line-height: 20px;
  white-space: nowrap;
}

.brand {
  margin-right: 28px;
  padding-top: 2px;
  font-family: "Noto Sans", sans-serif;
  font-size: 14px;
  font-weight: 700;
}

.win-buttons, .doc-buttons {
  display: flex;
  gap: 4px;
}

.win-buttons button {
  width: 20px;
  height: 20px;
  border: 1px solid #777;
  border-radius: 3px;
  background: linear-gradient(#777, #333);
}

.win-buttons .close {
  border-color: #e9a08c;
  background: linear-gradient(#f08a70, #d23c1c);
}

.win-buttons svg {
  display: block;
}

/* Menu */
.menubar {
  flex: none;
  height: 24px;
  display: flex;
  align-items: center;
  padding-right: 4px;
  background: linear-gradient(#e9e9e9, #dcdcdc);
}

.menubar ul {
  flex: 1;
  display: flex;
  gap: 13px;
  margin-left: 4px;
  list-style: none;
  white-space: nowrap;
}

.doc-buttons {
  gap: 3px;
}

.doc-buttons button {
  width: 17px;
  height: 17px;
  border: 1px solid #777;
  border-radius: 3px;
  background: #f6f6f6;
}

.doc-buttons svg {
  display: block;
}

/* Toolbars */
.toolbar {
  flex: none;
  height: 26px;
  display: flex;
  background: linear-gradient(#dedede, #cecece);
  border-top: 1px solid #f2f2f2;
}

.group {
  display: flex;
  align-items: center;
  padding-right: 1px;
  border-right: 1px solid #c6c6c6;
  background: linear-gradient(#e6e6e6, #d0d0d0);
}

.gap-wide { margin-left: 28px; }
.gap-dim { margin-left: 108px; }
.gap-note { margin-left: 112px; }
.gap-style { margin-left: 34px; }

.grip {
  flex: none;
  width: 2px;
  height: 16px;
  margin: 0 2px 0 4px;
  background: repeating-linear-gradient(#999 0 2px, #eee 2px 4px);
}

.tool {
  flex: none;
  width: 23px;
  height: 22px;
  display: flex;
  align-items: center;
  justify-content: center;
}

.tool svg {
  width: 18px;
  height: 18px;
}

.tool.on {
  border: 1px solid #555;
  border-radius: 3px;
  background: #fff;
}

.sep {
  flex: none;
  width: 6px;
  height: 22px;
  border-left: 1px solid #b2b2b2;
  box-shadow: inset 1px 0 #f6f6f6;
}

.caret {
  flex: none;
  width: 12px;
  height: 3px;
  background: #111;
  clip-path: polygon(3px 0, 9px 0, 6px 3px);
}

.low {
  align-self: flex-end;
  margin-bottom: 6px;
}

.start-app {
  display: flex;
  align-items: center;
  gap: 2px;
  width: 58px;
  padding-left: 2px;
  white-space: nowrap;
}

.start-app .caret {
  margin-left: -2px;
}

.selection {
  height: 28px;
  align-items: center;
  padding: 0 3px 0 5px;
  background: linear-gradient(#c6c6c6, #dedede);
}

.last {
  margin-left: auto;
}

.combo {
  position: relative;
  display: block;
  height: 17px;
  border: 1px solid #555;
  border-radius: 3px;
  background: #fff;
}

.combo::after {
  content: "";
  position: absolute;
  top: 0;
  right: 0;
  width: 16px;
  height: 15px;
  background: linear-gradient(#d9e9fb, #6fa8e4);
  pointer-events: none;
}

.combo::before {
  content: "";
  position: absolute;
  z-index: 1;
  top: 5px;
  right: 3px;
  border: 5px solid transparent;
  border-top: 6px solid #10204c;
  border-bottom: 0;
  pointer-events: none;
}

.combo select {
  display: block;
  width: 100%;
  height: 15px;
  padding-left: 1px;
  appearance: none;
  line-height: 15px;
}

.type {
  width: 110px;
}

.scope {
  width: 116px;
  margin: 0 5px 0 8px;
}

/* Status */
.status {
  flex: none;
  height: 22px;
  display: flex;
  border-top: 1px solid #f0f0f0;
  border-bottom: 1px solid #999;
  background: #dadada;
  line-height: 20px;
}

.cue {
  flex: 473;
}

.message {
  flex: 472;
  padding-left: 2px;
  border-left: 1px solid #fafafa;
  font-size: 13px;
  font-weight: bold;
}

.cell {
  width: 20px;
  border-left: 1px solid #fafafa;
}

.wide {
  width: 36px;
}

.status button {
  width: 22px;
  border-left: 1px solid #fafafa;
}

.status svg {
  display: block;
  width: 16px;
  height: 16px;
  margin: 1px auto;
}

.divider {
  position: relative;
  flex: none;
  height: 15px;
  background: linear-gradient(#c2c2c2 0 5px, #aaa 5px 8px, #eee 8px 10px, #ccc 10px);
}

.strip-nav {
  position: absolute;
  z-index: 2;
  top: 1px;
  right: 0;
  width: 104px;
  height: 19px;
  display: flex;
  justify-content: space-between;
  border: 1px solid #555;
  background: linear-gradient(#555, #161616 50%);
}

.strip-nav button {
  width: 19px;
  background: #e6e6e6;
}

.strip-nav svg {
  display: block;
  width: 14px;
  height: 14px;
  margin: auto;
}

/* Work area */
.work {
  flex: 1;
  min-height: 0;
  display: flex;
  background: #ababab;
}

.viewport {
  flex: 1;
  min-width: 0;
  border: 1px solid #666;
  border-left: 2px solid #888;
  border-bottom-color: #fff;
  background: linear-gradient(#b6b6b8, #d4d4d6 50%, #e9eaeb 85%, #e6e8e9);
}

.viewport svg {
  display: block;
  width: 100%;
  height: 100%;
}

.dims text {
  font-family: "Open Sans", sans-serif;
  font-size: 23px;
  font-weight: 300;
  fill: #9a6238;
  text-anchor: middle;
  dominant-baseline: central;
}

.wcs text, .triad text {
  font-family: "Liberation Sans", sans-serif;
  font-size: 10px;
}

.wcs text {
  fill: #eef2f3;
}

.triad text {
  font-size: 9px;
}

.navigator {
  flex: none;
  width: 292px;
  display: flex;
  flex-direction: column;
  padding: 7px 7px 4px 9px;
  border-left: 1px solid #fff;
  border-bottom: 1px solid #777;
  background: #ebebeb;
}

.nav-head {
  display: flex;
  height: 23px;
  margin-bottom: 4px;
}

.nav-head h2 {
  flex: 1;
  padding-left: 4px;
  border-right: 1px solid #888;
  border-bottom: 1px solid #888;
  background: linear-gradient(#f6f6f6, #d8dadb);
  font-size: 13px;
  line-height: 24px;
}

.nav-head button {
  width: 25px;
}

.nav-head svg {
  width: 13px;
  height: 13px;
  vertical-align: middle;
}

.tree {
  flex: 1;
  min-height: 0;
  display: flex;
  flex-direction: column;
  justify-content: space-between;
  border: 1px solid #555;
  background:
    linear-gradient(90deg, transparent 200px, #d6dbd9 200px 201px, transparent 201px),
    repeating-linear-gradient(#fff 0 19px, #e3e3e3 19px 20px, #f6f6f6 20px 39px, #e3e3e3 39px 40px) 0 17px;
}

table {
  width: 100%;
  border-collapse: collapse;
  table-layout: fixed;
}

th {
  height: 17px;
  padding: 0 0 0 5px;
  border-right: 1px solid #999;
  border-bottom: 1px solid #aaa;
  background: linear-gradient(#f8f8f8, #d9dbdc);
  font-weight: normal;
  line-height: 15px;
  text-align: left;
}

.name {
  width: 201px;
}

.sort {
  display: inline-block;
  margin-left: 16px;
  border: 5px solid transparent;
  border-top: 0;
  border-bottom: 5px solid #111;
}

td {
  height: 20px;
  padding: 0;
}

.node {
  display: flex;
  align-items: center;
  height: 20px;
  white-space: nowrap;
}

.ico {
  width: 16px;
  height: 16px;
  margin-right: 1px;
}

.ico:has(+ .ico) {
  margin-right: 0;
}

.guide {
  flex: none;
  width: 20px;
  height: 20px;
  display: flex;
  align-items: center;
  background-repeat: no-repeat;
}

/* dotted connectors between rows */
.first, .mid, .tee, .last.guide, .end {
  background-image: repeating-linear-gradient(#aaa 0 1px, transparent 1px 2px), repeating-linear-gradient(90deg, #aaa 0 1px, transparent 1px 2px);
  background-size: 1px 20px, 10px 1px;
  background-position: 9px 0, 10px 9px;
}

.first {
  background-size: 1px 10px, 10px 1px;
  background-position: 9px 10px, 10px 9px;
}

.last.guide {
  margin-left: 0;
  background-size: 1px 10px, 10px 1px;
}

.end {
  background-size: 1px 10px, 10px 1px;
}

.line {
  background: repeating-linear-gradient(#aaa 0 1px, transparent 1px 2px) 9px 0 / 1px 20px no-repeat;
}

.guide b {
  width: 9px;
  height: 9px;
  margin-left: 5px;
  border: 1px solid #888;
  border-radius: 2px;
  background: #fff;
  font-size: 10px;
  font-weight: normal;
  line-height: 7px;
  text-align: center;
}

.node input {
  appearance: none;
  width: 12px;
  height: 12px;
  margin: 0 3px 0 1px;
  border: 1px solid #222;
  background: #fff;
}

.node input:checked::after {
  content: "";
  display: block;
  height: 10px;
  background: #1fae35;
  clip-path: polygon(5% 50%, 25% 35%, 40% 60%, 85% 5%, 100% 15%, 45% 95%, 30% 95%);
}

.hscroll {
  display: flex;
  height: 17px;
  padding: 0 1px 1px;
  background: #f6f6f6;
}

.hscroll button {
  width: 16px;
  border-radius: 2px;
  background: #c4d3fb;
}

.hscroll svg {
  display: block;
  width: 14px;
  height: 14px;
  margin: auto;
}

.track {
  flex: 1;
}

.thumb {
  display: block;
  width: 88%;
  height: 15px;
  margin-left: 2px;
  border: 1px solid #9cb0e8;
  border-radius: 2px;
  background:
    repeating-linear-gradient(90deg, #93a8e0 0 1px, #eef2ff 1px 2px) center / 8px 6px no-repeat,
    linear-gradient(#cbd9fe, #b6c9f8);
}

.handle {
  flex: none;
  height: 12px;
  background:
    linear-gradient(#ddd, #aaa) center / 47px 5px no-repeat,
    linear-gradient(#bbb, #bbb) center / 100% 1px no-repeat;
}

.section {
  flex: none;
  height: 23px;
  display: flex;
  align-items: center;
  justify-content: space-between;
  padding: 2px 4px 0 6px;
  border-bottom: 1px solid #999;
  background:
    linear-gradient(#aaa, #aaa) right 23px top / 1px 100% no-repeat,
    linear-gradient(#f6f6f6, #d4d6d7);
  font-size: 13px;
  font-weight: bold;
}

.section svg {
  width: 14px;
  height: 14px;
}

.tabs {
  flex: none;
  width: 27px;
  display: flex;
  flex-direction: column;
  gap: 2px;
  padding-top: 16px;
}

.tabs button {
  width: 22px;
  height: 32px;
  border: 1px solid #777;
  border-left: 0;
  border-radius: 0 4px 4px 0;
  background: #cfcfcf;
}

.tabs .active {
  width: 24px;
  background: #ebebeb;
}

.tabs .spaced {
  margin-top: 12px;
}

.tabs svg {
  display: block;
  width: 18px;
  height: 18px;
  margin: auto;
}

.tabs .three {
  font-family: "Liberation Sans", sans-serif;
  font-size: 12px;
  font-weight: bold;
  text-shadow: 1px 1px #d8cc30;
}

/* Sketch toolbar */
.sketch {
  height: 29px;
  background: linear-gradient(#e2e2e2, #c6c6c6);
}

.sketch .group {
  background: none;
}

.sketch .tool svg {
  stroke: #858585;
}

.disabled {
  width: 80px;
  margin: 0 4px 0 3px;
  border-color: #999;
  background: #cfcfcf;
}

.disabled::after {
  background: #eee;
}

.disabled::before {
  border-top-color: #888;
}

/* Taskbar */
.taskbar {
  flex: none;
  height: 30px;
  display: flex;
  align-items: stretch;
  background: linear-gradient(#4a8cf0, #245ddb 12%, #2460e0 85%, #1a41a8);
  color: #fff;
}

.taskbar svg {
  width: 18px;
  height: 18px;
}

.start {
  width: 96px;
  display: flex;
  align-items: center;
  gap: 7px;
  padding-left: 10px;
  border-radius: 0 10px 10px 0;
  background: linear-gradient(#6dbb63, #3a9338 15%, #3b9a3a 80%, #236b22);
  font-size: 19px;
  font-style: italic;
  line-height: 26px;
  text-shadow: 1px 1px 1px #143c14;
  white-space: nowrap;
}

.start svg {
  overflow: visible;
}

.quick {
  display: flex;
  align-items: center;
  gap: 5px;
  width: 137px;
  padding-left: 12px;
}

.quick svg {
  display: block;
}

.tasks {
  flex: 1;
  display: flex;
  gap: 1px;
  padding: 3px 0 2px;
}

.tasks button {
  flex: 0 1 126px;
  min-width: 0;
  display: flex;
  align-items: center;
  gap: 2px;
  padding-left: 9px;
  border-radius: 3px;
  background: linear-gradient(#6aa4fa, #3c80f2 15%, #3a7cec);
  white-space: nowrap;
}

.tasks .current {
  background: #1d4fb4;
}

.keyboard {
  width: 36px;
}

.keyboard svg {
  display: block;
  margin: 0 auto 0 0;
}

.tray {
  display: flex;
  align-items: center;
  padding-right: 14px;
  border-left: 1px solid #0a4fae;
  background: linear-gradient(#3fb4f6, #1290e8 15%, #129bee 85%, #0c6cc0);
}

.expand {
  width: 18px;
  margin-left: -9px;
}

.expand svg {
  display: block;
}

.net {
  margin-left: 17px;
}

time {
  margin-left: 7px;
  font-size: 10px;
}
```
